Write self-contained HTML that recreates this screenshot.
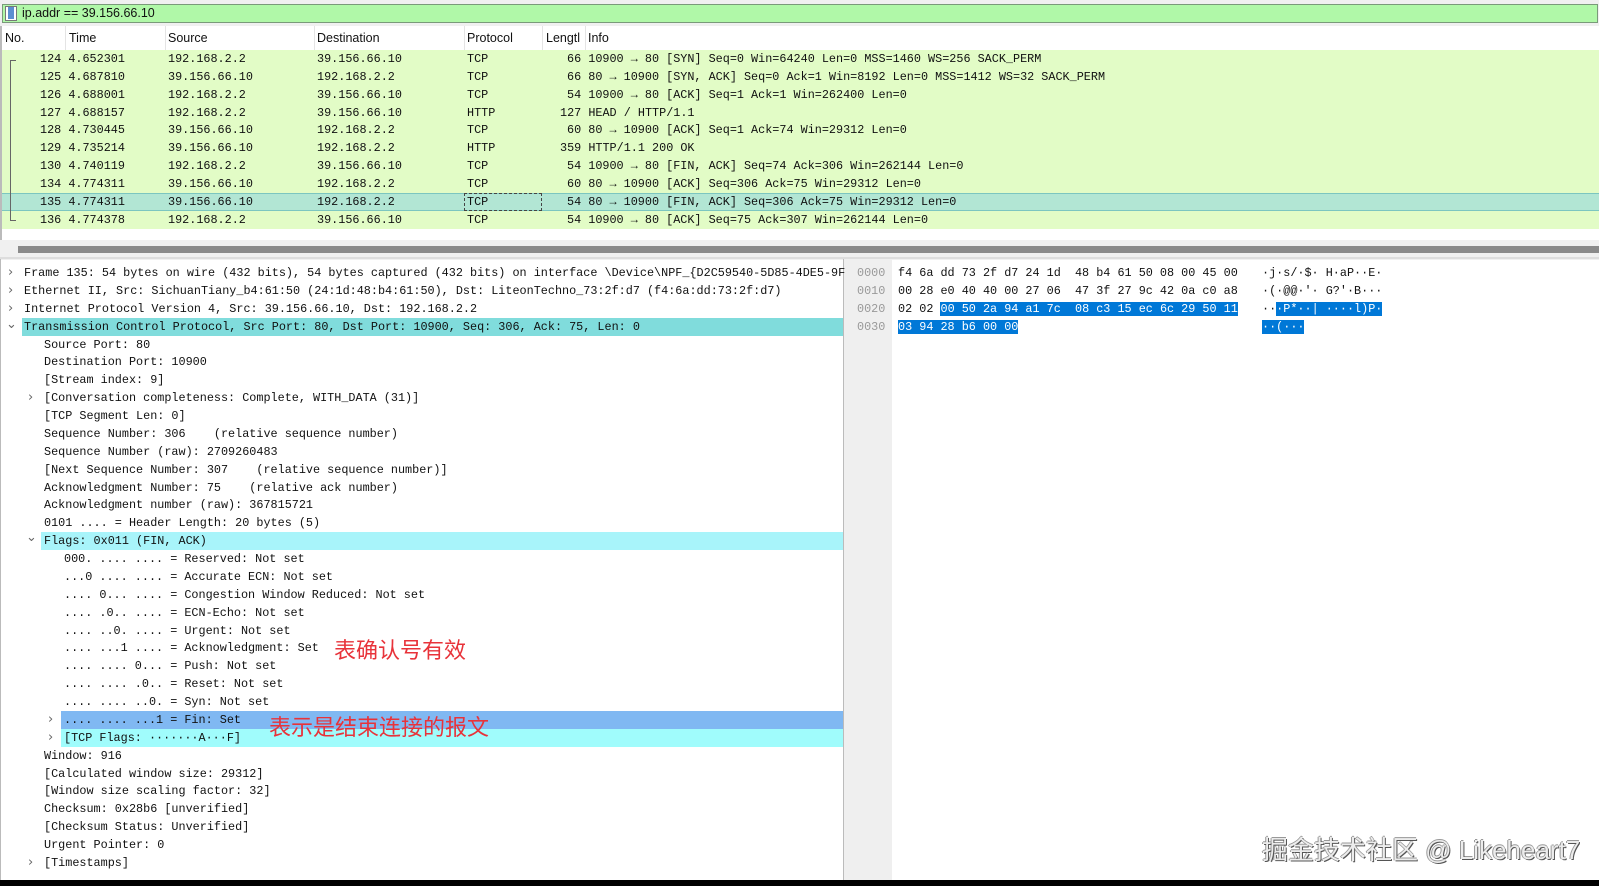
<!DOCTYPE html>
<html><head><meta charset="utf-8"><style>
*{margin:0;padding:0;box-sizing:border-box}
body{width:1599px;height:886px;overflow:hidden;background:#fff;position:relative;font-family:"Liberation Mono",monospace;font-size:11.8px;color:#111}
.a{position:absolute;white-space:pre}
.sans{font-family:"Liberation Sans",sans-serif;font-size:12.5px}
.row{position:absolute;left:2px;width:1597px;height:18px;background:#e2fcc6}
.row span{position:absolute;top:2px;white-space:pre}
.hd span{position:absolute;top:5px}
.dl{position:absolute;height:18px;line-height:18px;white-space:pre}
.ar{position:absolute;color:#666;font-family:"DejaVu Sans",sans-serif;font-size:13px;line-height:18px}
.hx{position:absolute;line-height:18px;white-space:pre}
.sel{background:#0078d7;color:#fff}
.cn{position:absolute;font-family:"Liberation Sans","Noto Sans CJK SC",sans-serif;font-size:22px;color:#e8333a;white-space:pre}
</style></head><body>
<div class="a" style="left:0;top:0;width:1599px;height:26px;background:#f0f0f0"></div>
<div class="a" style="left:2px;top:4px;width:1596px;height:19px;background:#b0f8a8;border:1px solid #7a9a7a"></div>
<div class="a" style="left:5px;top:6px;width:12px;height:15px;background:#fff;border:1px solid #777"></div>
<div class="a" style="left:8px;top:7px;width:6px;height:12px;background:#5b8fd0"></div>
<div class="a sans" style="left:22px;top:6px;font-size:12.5px">ip.addr == 39.156.66.10</div>
<div class="a hd sans" style="left:0;top:26px;width:1599px;height:24px;background:#fff;border-left:2px solid #bbb">
<span style="left:3px">No.</span><span style="left:67px">Time</span><span style="left:166px">Source</span><span style="left:315px">Destination</span><span style="left:465px">Protocol</span><span style="left:544px">Lengtl</span><span style="left:586px">Info</span>
<div class="a" style="left:63px;top:0;width:1px;height:24px;background:#e4e4e4"></div>
<div class="a" style="left:163px;top:0;width:1px;height:24px;background:#e4e4e4"></div>
<div class="a" style="left:312px;top:0;width:1px;height:24px;background:#e4e4e4"></div>
<div class="a" style="left:462px;top:0;width:1px;height:24px;background:#e4e4e4"></div>
<div class="a" style="left:540px;top:0;width:1px;height:24px;background:#e4e4e4"></div>
<div class="a" style="left:583px;top:0;width:1px;height:24px;background:#e4e4e4"></div>
</div>
<div class="a" style="left:0;top:50px;width:2px;height:190px;background:#bbb"></div>
<div class="row" style="top:50px"><span style="left:38px">124 4.652301</span><span style="left:166px">192.168.2.2</span><span style="left:315px">39.156.66.10</span><span style="left:465px">TCP</span><span style="left:565px">66 10900 → 80 [SYN] Seq=0 Win=64240 Len=0 MSS=1460 WS=256 SACK_PERM</span></div>
<div class="row" style="top:68px"><span style="left:38px">125 4.687810</span><span style="left:166px">39.156.66.10</span><span style="left:315px">192.168.2.2</span><span style="left:465px">TCP</span><span style="left:565px">66 80 → 10900 [SYN, ACK] Seq=0 Ack=1 Win=8192 Len=0 MSS=1412 WS=32 SACK_PERM</span></div>
<div class="row" style="top:86px"><span style="left:38px">126 4.688001</span><span style="left:166px">192.168.2.2</span><span style="left:315px">39.156.66.10</span><span style="left:465px">TCP</span><span style="left:565px">54 10900 → 80 [ACK] Seq=1 Ack=1 Win=262400 Len=0</span></div>
<div class="row" style="top:104px"><span style="left:38px">127 4.688157</span><span style="left:166px">192.168.2.2</span><span style="left:315px">39.156.66.10</span><span style="left:465px">HTTP</span><span style="left:558px">127 HEAD / HTTP/1.1</span></div>
<div class="row" style="top:121px"><span style="left:38px">128 4.730445</span><span style="left:166px">39.156.66.10</span><span style="left:315px">192.168.2.2</span><span style="left:465px">TCP</span><span style="left:565px">60 80 → 10900 [ACK] Seq=1 Ack=74 Win=29312 Len=0</span></div>
<div class="row" style="top:139px"><span style="left:38px">129 4.735214</span><span style="left:166px">39.156.66.10</span><span style="left:315px">192.168.2.2</span><span style="left:465px">HTTP</span><span style="left:558px">359 HTTP/1.1 200 OK</span></div>
<div class="row" style="top:157px"><span style="left:38px">130 4.740119</span><span style="left:166px">192.168.2.2</span><span style="left:315px">39.156.66.10</span><span style="left:465px">TCP</span><span style="left:565px">54 10900 → 80 [FIN, ACK] Seq=74 Ack=306 Win=262144 Len=0</span></div>
<div class="row" style="top:175px"><span style="left:38px">134 4.774311</span><span style="left:166px">39.156.66.10</span><span style="left:315px">192.168.2.2</span><span style="left:465px">TCP</span><span style="left:565px">60 80 → 10900 [ACK] Seq=306 Ack=75 Win=29312 Len=0</span></div>
<div class="row" style="top:193px;background:#b2e6d4;border-top:1px solid #7cc6c0;border-bottom:1px solid #7cc6c0"><span style="left:38px;top:1px">135 4.774311</span><span style="left:166px;top:1px">39.156.66.10</span><span style="left:315px;top:1px">192.168.2.2</span><span style="left:465px;top:1px">TCP</span><span style="left:565px;top:1px">54 80 → 10900 [FIN, ACK] Seq=306 Ack=75 Win=29312 Len=0</span>
<div class="a" style="left:462px;top:-1px;width:78px;height:18px;border:1px dashed #444"></div></div>
<div class="row" style="top:211px"><span style="left:38px">136 4.774378</span><span style="left:166px">192.168.2.2</span><span style="left:315px">39.156.66.10</span><span style="left:465px">TCP</span><span style="left:565px">54 10900 → 80 [ACK] Seq=75 Ack=307 Win=262144 Len=0</span></div>
<div class="a" style="left:10px;top:60px;width:1px;height:160px;background:#666"></div>
<div class="a" style="left:10px;top:60px;width:6px;height:1px;background:#666"></div>
<div class="a" style="left:10px;top:220px;width:6px;height:1px;background:#666"></div>
<div class="a" style="left:0;top:240px;width:1599px;height:20px;background:#f0f0f0"></div>
<div class="a" style="left:18px;top:246px;width:1581px;height:7px;background:#8a8a8a"></div>
<div class="a" style="left:0;top:257px;width:1599px;height:2px;background:#ddd"></div>
<div class="a" style="left:843px;top:259px;width:49px;height:621px;background:#efefef;border-left:1px solid #bbb"></div>
<div class="a" style="left:0;top:259px;width:1px;height:621px;background:#bbb"></div>
<div class="a" style="left:22px;top:318px;width:821px;height:18px;background:#80dcdc"></div>
<div class="a" style="left:41px;top:532px;width:802px;height:18px;background:#a8f4fa"></div>
<div class="a" style="left:61px;top:711px;width:782px;height:18px;background:#80b8f2"></div>
<div class="a" style="left:61px;top:729px;width:782px;height:18px;background:#a0fcfc"></div>
<div class="dl" style="left:24px;top:264px">Frame 135: 54 bytes on wire (432 bits), 54 bytes captured (432 bits) on interface \Device\NPF_{D2C59540-5D85-4DE5-9F</div>
<div class="dl" style="left:24px;top:282px">Ethernet II, Src: SichuanTiany_b4:61:50 (24:1d:48:b4:61:50), Dst: LiteonTechno_73:2f:d7 (f4:6a:dd:73:2f:d7)</div>
<div class="dl" style="left:24px;top:300px">Internet Protocol Version 4, Src: 39.156.66.10, Dst: 192.168.2.2</div>
<div class="dl" style="left:24px;top:318px">Transmission Control Protocol, Src Port: 80, Dst Port: 10900, Seq: 306, Ack: 75, Len: 0</div>
<div class="dl" style="left:44px;top:336px">Source Port: 80</div>
<div class="dl" style="left:44px;top:353px">Destination Port: 10900</div>
<div class="dl" style="left:44px;top:371px">[Stream index: 9]</div>
<div class="dl" style="left:44px;top:389px">[Conversation completeness: Complete, WITH_DATA (31)]</div>
<div class="dl" style="left:44px;top:407px">[TCP Segment Len: 0]</div>
<div class="dl" style="left:44px;top:425px">Sequence Number: 306    (relative sequence number)</div>
<div class="dl" style="left:44px;top:443px">Sequence Number (raw): 2709260483</div>
<div class="dl" style="left:44px;top:461px">[Next Sequence Number: 307    (relative sequence number)]</div>
<div class="dl" style="left:44px;top:479px">Acknowledgment Number: 75    (relative ack number)</div>
<div class="dl" style="left:44px;top:496px">Acknowledgment number (raw): 367815721</div>
<div class="dl" style="left:44px;top:514px">0101 .... = Header Length: 20 bytes (5)</div>
<div class="dl" style="left:44px;top:532px">Flags: 0x011 (FIN, ACK)</div>
<div class="dl" style="left:64px;top:550px">000. .... .... = Reserved: Not set</div>
<div class="dl" style="left:64px;top:568px">...0 .... .... = Accurate ECN: Not set</div>
<div class="dl" style="left:64px;top:586px">.... 0... .... = Congestion Window Reduced: Not set</div>
<div class="dl" style="left:64px;top:604px">.... .0.. .... = ECN-Echo: Not set</div>
<div class="dl" style="left:64px;top:622px">.... ..0. .... = Urgent: Not set</div>
<div class="dl" style="left:64px;top:639px">.... ...1 .... = Acknowledgment: Set</div>
<div class="dl" style="left:64px;top:657px">.... .... 0... = Push: Not set</div>
<div class="dl" style="left:64px;top:675px">.... .... .0.. = Reset: Not set</div>
<div class="dl" style="left:64px;top:693px">.... .... ..0. = Syn: Not set</div>
<div class="dl" style="left:64px;top:711px">.... .... ...1 = Fin: Set</div>
<div class="dl" style="left:64px;top:729px">[TCP Flags: ·······A···F]</div>
<div class="dl" style="left:44px;top:747px">Window: 916</div>
<div class="dl" style="left:44px;top:765px">[Calculated window size: 29312]</div>
<div class="dl" style="left:44px;top:782px">[Window size scaling factor: 32]</div>
<div class="dl" style="left:44px;top:800px">Checksum: 0x28b6 [unverified]</div>
<div class="dl" style="left:44px;top:818px">[Checksum Status: Unverified]</div>
<div class="dl" style="left:44px;top:836px">Urgent Pointer: 0</div>
<div class="dl" style="left:44px;top:854px">[Timestamps]</div>
<div class="ar" style="left:8px;top:264px">›</div>
<div class="ar" style="left:8px;top:282px">›</div>
<div class="ar" style="left:8px;top:300px">›</div>
<div class="ar" style="left:6px;top:316px">⌄</div>
<div class="ar" style="left:28px;top:389px">›</div>
<div class="ar" style="left:26px;top:529px">⌄</div>
<div class="ar" style="left:48px;top:711px">›</div>
<div class="ar" style="left:48px;top:729px">›</div>
<div class="ar" style="left:28px;top:854px">›</div>
<div class="cn" style="left:334px;top:633px">表确认号有效</div>
<div class="cn" style="left:269px;top:710px">表示是结束连接的报文</div>
<div class="hx" style="left:857px;top:264px;color:#999">0000
0010
0020
0030</div>
<div class="hx" style="left:898px;top:264px">f4 6a dd 73 2f d7 24 1d  48 b4 61 50 08 00 45 00
00 28 e0 40 40 00 27 06  47 3f 27 9c 42 0a c0 a8
02 02 <span class="sel">00 50 2a 94 a1 7c  08 c3 15 ec 6c 29 50 11</span>
<span class="sel">03 94 28 b6 00 00</span></div>
<div class="hx" style="left:1262px;top:264px">·j·s/·$· H·aP··E·
·(·@@·'· G?'·B···
··<span class="sel">·P*··| ····l)P·</span>
<span class="sel">··(···</span></div>
<div class="a" style="left:1262px;top:830px;font-family:'Liberation Sans','Noto Sans CJK SC',sans-serif;font-size:26px;color:#ececec;text-shadow:1px 1px 0 #555,-1px 0 0 #999,0 -1px 0 #999">掘金技术社区 @ Likeheart7</div>
<div class="a" style="left:0;top:880px;width:1599px;height:6px;background:#000"></div>
</body></html>
